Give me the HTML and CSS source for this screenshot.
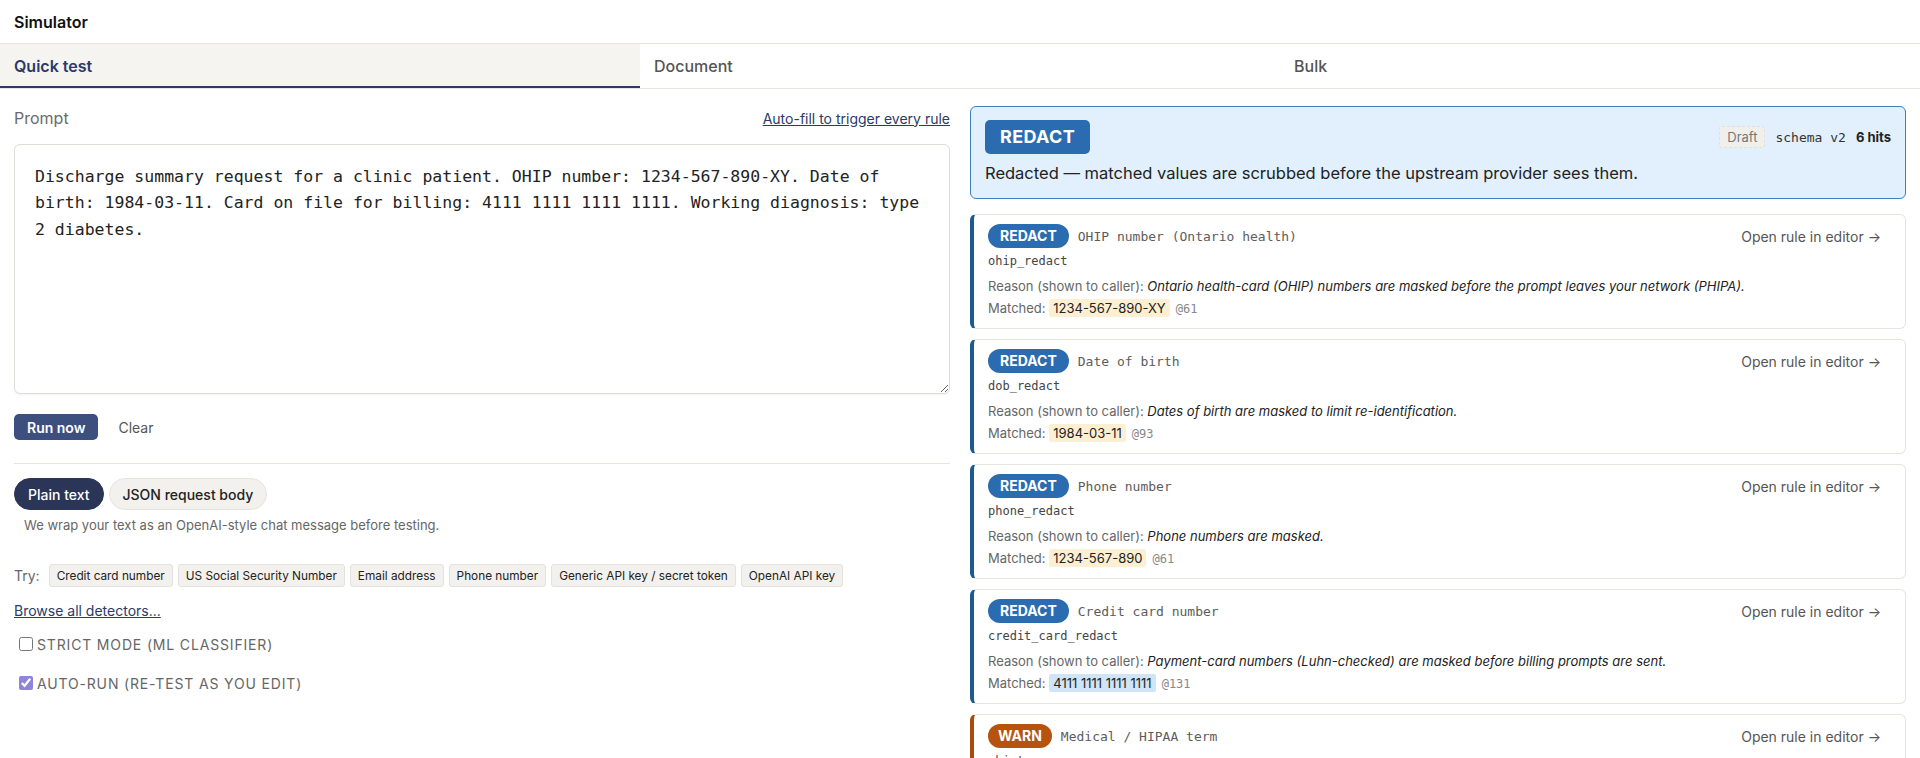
FILE: index.html
```html
<!DOCTYPE html>
<html lang="en">
<head>
    <meta charset="UTF-8">
    <meta name="viewport" content="width=device-width, initial-scale=1.0">
    <title>Simulator</title>
    <link rel="stylesheet" href="styles.css">
</head>
<body>
    <div class="app">
        <header class="page-header">Simulator</header>

        <nav class="tabs">
            <div class="tab active">Quick test</div>
            <div class="tab">Document</div>
            <div class="tab">Bulk</div>
        </nav>

        <main class="sim">
            <!-- Left: prompt input -->
            <section class="input-col">
                <div class="prompt-head">
                    <span class="prompt-label">Prompt</span>
                    <a href="#" class="link">Auto-fill to trigger every rule</a>
                </div>

                <textarea class="prompt-box" spellcheck="false">Discharge summary request for a clinic patient. OHIP number: 1234-567-890-XY. Date of birth: 1984-03-11. Card on file for billing: 4111 1111 1111 1111. Working diagnosis: type 2 diabetes.</textarea>

                <div class="actions">
                    <button class="btn-run">Run now</button>
                    <button class="btn-clear">Clear</button>
                </div>

                <hr class="divider">

                <div class="mode-pills">
                    <button class="pill selected">Plain text</button>
                    <button class="pill">JSON request body</button>
                </div>
                <p class="hint">We wrap your text as an OpenAI-style chat message before testing.</p>

                <div class="try-row">
                    <span class="try-label">Try:</span>
                    <button class="chip">Credit card number</button>
                    <button class="chip">US Social Security Number</button>
                    <button class="chip">Email address</button>
                    <button class="chip">Phone number</button>
                    <button class="chip">Generic API key / secret token</button>
                    <button class="chip">OpenAI API key</button>
                </div>

                <a href="#" class="link browse">Browse all detectors...</a>

                <label class="option"><input type="checkbox">Strict mode (ML classifier)</label>
                <label class="option auto"><input type="checkbox" checked>Auto-run (re-test as you edit)</label>
            </section>

            <!-- Right: results -->
            <section class="result-col">
                <div class="verdict">
                    <div class="verdict-top">
                        <span class="verdict-badge">REDACT</span>
                        <div class="verdict-meta">
                            <span class="draft">Draft</span>
                            <span class="mono">schema v2</span>
                            <strong>6 hits</strong>
                        </div>
                    </div>
                    <p class="verdict-text">Redacted — matched values are scrubbed before the upstream provider sees them.</p>
                </div>

                <div class="hit">
                    <div class="hit-top">
                        <span class="badge">REDACT</span>
                        <span class="hit-name">OHIP number (Ontario health)</span>
                        <a href="#" class="open-rule">Open rule in editor →</a>
                    </div>
                    <div class="rule-id">ohip_redact</div>
                    <div class="reason">Reason (shown to caller): <em>Ontario health-card (OHIP) numbers are masked before the prompt leaves your network (PHIPA).</em></div>
                    <div class="matched">Matched: <mark>1234-567-890-XY</mark><span class="offset">@61</span></div>
                </div>

                <div class="hit">
                    <div class="hit-top">
                        <span class="badge">REDACT</span>
                        <span class="hit-name">Date of birth</span>
                        <a href="#" class="open-rule">Open rule in editor →</a>
                    </div>
                    <div class="rule-id">dob_redact</div>
                    <div class="reason">Reason (shown to caller): <em>Dates of birth are masked to limit re-identification.</em></div>
                    <div class="matched">Matched: <mark>1984-03-11</mark><span class="offset">@93</span></div>
                </div>

                <div class="hit">
                    <div class="hit-top">
                        <span class="badge">REDACT</span>
                        <span class="hit-name">Phone number</span>
                        <a href="#" class="open-rule">Open rule in editor →</a>
                    </div>
                    <div class="rule-id">phone_redact</div>
                    <div class="reason">Reason (shown to caller): <em>Phone numbers are masked.</em></div>
                    <div class="matched">Matched: <mark>1234-567-890</mark><span class="offset">@61</span></div>
                </div>

                <div class="hit">
                    <div class="hit-top">
                        <span class="badge">REDACT</span>
                        <span class="hit-name">Credit card number</span>
                        <a href="#" class="open-rule">Open rule in editor →</a>
                    </div>
                    <div class="rule-id">credit_card_redact</div>
                    <div class="reason">Reason (shown to caller): <em>Payment-card numbers (Luhn-checked) are masked before billing prompts are sent.</em></div>
                    <div class="matched">Matched: <mark class="card">4111 1111 1111 1111</mark><span class="offset">@131</span></div>
                </div>

                <div class="hit warn">
                    <div class="hit-top">
                        <span class="badge">WARN</span>
                        <span class="hit-name">Medical / HIPAA term</span>
                        <a href="#" class="open-rule">Open rule in editor →</a>
                    </div>
                    <div class="rule-id">phi_term_warn</div>
                    <div class="reason">Reason (shown to caller): <em>Clinical terms are flagged for review.</em></div>
                    <div class="matched">Matched: <mark>diabetes</mark><span class="offset">@183</span></div>
                </div>
            </section>
        </main>
    </div>
</body>
</html>
```

FILE: styles.css
```css
* {
    box-sizing: border-box;
    margin: 0;
    padding: 0;
}

html, body {
    height: 100%;
}

body {
    font-family: Inter, "Noto Sans", sans-serif;
    color: #222;
    background-color: #fff;
    overflow: hidden;
}

.app {
    height: 100vh;
    display: flex;
    flex-direction: column;
}

.page-header {
    height: 44px;
    line-height: 44px;
    padding: 0 14px;
    font-size: 16px;
    font-weight: 600;
    color: #111;
    border-bottom: 1px solid #e6e4df;
}

.tabs {
    display: grid;
    grid-template-columns: 1fr 1fr 1fr;
    border-bottom: 1px solid #e6e4df;
}

.tab {
    height: 44px;
    line-height: 45px;
    padding: 0 14px;
    font-size: 16px;
    font-weight: 500;
    color: #555;
}

.tab.active {
    background-color: #f5f4f1;
    color: #2b3a67;
    font-weight: 600;
    box-shadow: inset 0 -2px 0 #2b3a67;
}

.sim {
    flex: 1;
    min-height: 0;
    display: grid;
    grid-template-columns: 1fr 1fr;
    gap: 20px;
    padding: 17px 14px 0;
}

.input-col,
.result-col {
    min-width: 0;
    overflow: hidden;
}

/* Prompt area */
.prompt-head {
    display: flex;
    justify-content: space-between;
    align-items: center;
    height: 24px;
}

.prompt-label {
    font-size: 16px;
    color: #6b6b6b;
}

.link {
    font-size: 14px;
    color: #2b3a67;
    text-decoration: underline;
}

.prompt-box {
    display: block;
    width: 100%;
    height: 250px;
    margin-top: 14px;
    padding: 19px 20px;
    font-family: "DejaVu Sans Mono", "Liberation Mono", monospace;
    font-size: 16.5px;
    line-height: 26.4px;
    color: #222;
    border: 1px solid #dedcd7;
    border-radius: 6px;
    box-shadow: 0 1px 2px rgba(0,0,0,0.05);
    resize: vertical;
    outline: none;
}

.actions {
    display: flex;
    align-items: center;
    gap: 12px;
    margin-top: 20px;
}

.btn-run {
    height: 26px;
    padding: 0 13px;
    font-family: inherit;
    font-size: 14px;
    font-weight: 600;
    color: #fff;
    background-color: #3d4f7f;
    border: none;
    border-radius: 5px;
}

.btn-clear {
    padding: 0 8px;
    font-family: inherit;
    font-size: 14px;
    color: #555;
    background: none;
    border: none;
}

.divider {
    margin-top: 23px;
    border: none;
    border-top: 1px solid #e6e4df;
}

.mode-pills {
    display: flex;
    gap: 5px;
    margin-top: 14px;
}

.pill {
    height: 32px;
    padding: 0 13px;
    font-family: inherit;
    font-size: 14px;
    font-weight: 500;
    color: #222;
    background-color: #f2f1ed;
    border: 1px solid #e6e4de;
    border-radius: 16px;
}

.pill.selected {
    color: #fff;
    background-color: #2a3558;
    border-color: #2a3558;
}

.hint {
    margin: 6px 0 0 10px;
    font-size: 13px;
    line-height: 18px;
    color: #666;
}

.try-row {
    display: flex;
    align-items: center;
    gap: 5px;
    margin-top: 30px;
}

.try-label {
    font-size: 14px;
    color: #666;
    margin-right: 4px;
}

.chip {
    height: 23px;
    padding: 0 7px;
    font-family: inherit;
    font-size: 11.8px;
    color: #222;
    background-color: #f2f1ed;
    border: 1px solid #e4e2dc;
    border-radius: 3px;
}

.browse {
    display: inline-block;
    margin-top: 14px;
    line-height: 20px;
}

.option {
    display: flex;
    align-items: center;
    margin-top: 13px;
    height: 20px;
    font-size: 14px;
    letter-spacing: 0.06em;
    text-transform: uppercase;
    color: #666;
}

.option.auto {
    margin-top: 19px;
}

.option input {
    width: 14px;
    height: 14px;
    margin: 0 4px 0 5px;
    accent-color: #8d85da;
}

/* Results */
.verdict {
    padding: 13px 14px;
    background-color: #e1f0fc;
    border: 1px solid #3f7fc0;
    border-radius: 6px;
}

.verdict-top {
    display: flex;
    justify-content: space-between;
    align-items: center;
}

.verdict-badge {
    display: inline-block;
    height: 34px;
    line-height: 34px;
    padding: 0 15px;
    font-size: 18px;
    font-weight: 700;
    letter-spacing: 0.02em;
    color: #fff;
    background-color: #2b6cb0;
    border-radius: 5px;
}

.verdict-meta {
    display: flex;
    align-items: center;
    gap: 10px;
    font-size: 13px;
}

.draft {
    height: 22px;
    line-height: 20px;
    padding: 0 7px;
    color: #777;
    background-color: #f1efeb;
    border: 1px dashed #e2dfd8;
    border-radius: 3px;
}

.mono {
    font-family: "DejaVu Sans Mono", "Liberation Mono", monospace;
    color: #333;
}

.verdict-meta strong {
    font-weight: 700;
    color: #222;
}

.verdict-text {
    margin-top: 7px;
    font-size: 16.5px;
    line-height: 24px;
    color: #222;
}

.hit {
    margin-top: 10px;
    padding: 9px 24px 10px 14px;
    border: 1px solid #e6e4df;
    border-left: 4px solid #1d5b8e;
    border-radius: 6px;
}

.verdict + .hit {
    margin-top: 15px;
}

.hit.warn {
    border-left-color: #ab4c0e;
}

.hit-top {
    display: flex;
    align-items: center;
    gap: 9px;
    height: 24px;
}

.badge {
    height: 24px;
    line-height: 24px;
    padding: 0 12px;
    font-size: 14px;
    font-weight: 700;
    color: #fff;
    background-color: #2b6cb0;
    border-radius: 12px;
}

.warn .badge {
    background-color: #b5530f;
    padding: 0 10px;
}

.hit-name {
    font-family: "DejaVu Sans Mono", "Liberation Mono", monospace;
    font-size: 13px;
    color: #5c5c5c;
}

.open-rule {
    margin-left: auto;
    font-size: 14px;
    color: #555;
    text-decoration: none;
}

.rule-id {
    height: 18px;
    margin-top: 4px;
    font-family: "DejaVu Sans Mono", "Liberation Mono", monospace;
    font-size: 12px;
    line-height: 18px;
    color: #444;
}

.reason,
.matched {
    height: 20px;
    font-size: 13px;
    line-height: 20px;
    color: #666;
    white-space: nowrap;
}

.reason {
    margin-top: 6px;
}

.reason em {
    color: #222;
}

.matched {
    margin-top: 2px;
}

.matched mark {
    padding: 1px 4px;
    color: #222;
    background-color: #fdefd2;
    border-radius: 2px;
}

.matched mark.card {
    background-color: #cfe4f7;
}

.offset {
    margin-left: 6px;
    font-family: "DejaVu Sans Mono", "Liberation Mono", monospace;
    font-size: 12px;
    color: #888;
}
```
